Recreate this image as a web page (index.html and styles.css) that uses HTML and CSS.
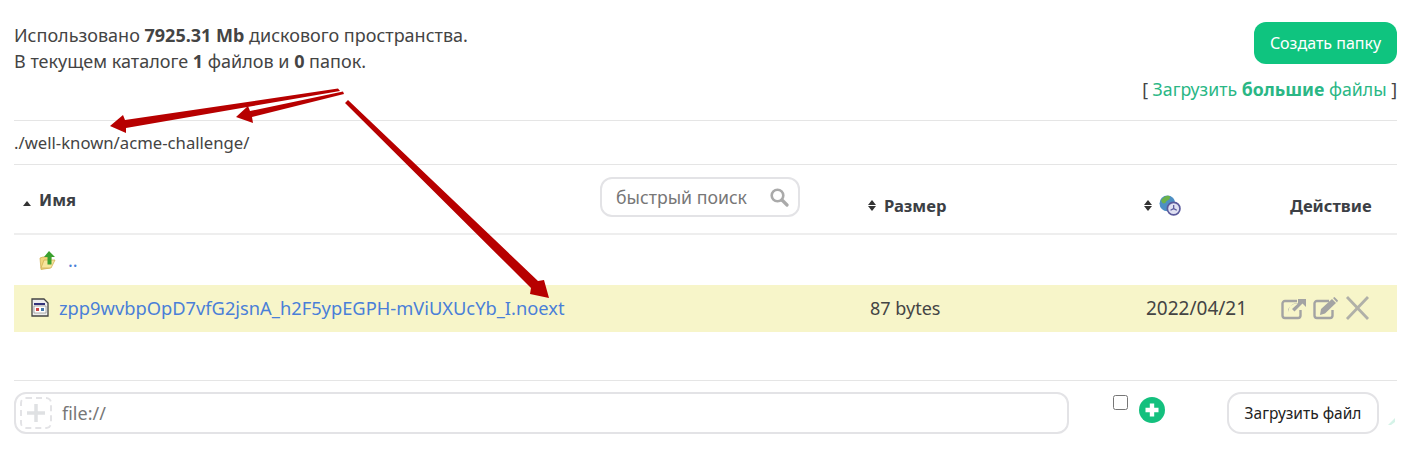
FILE: index.html
```html
<!DOCTYPE html>
<html lang="ru">
<head>
    <meta charset="UTF-8">
    <meta name="viewport" content="width=device-width, initial-scale=1.0">
    <title>Файловый менеджер</title>
    <link rel="stylesheet" href="styles.css">
</head>
<body>
    <div class="top">
        <div class="stats">
            Использовано <b>7925.31 Mb</b> дискового пространства.<br>
            В текущем каталоге <b>1</b> файлов и <b>0</b> папок.
        </div>
        <div class="top-actions">
            <button class="btn-green">Создать папку</button>
            <div class="big-files">[ <a href="#">Загрузить <b>большие</b> файлы</a> ]</div>
        </div>
    </div>

    <div class="path">./well-known/acme-challenge/</div>

    <div class="row head">
        <div class="cell-name">
            <span class="head-name"><i class="sort-up"></i>Имя</span>
            <div class="search">
                <span>быстрый поиск</span>
                <svg width="20" height="20" viewBox="0 0 20 20"><circle cx="8.500" cy="8.500" r="5.800" fill="none" stroke="#aaa" stroke-width="2.600"/><path d="M13 13l5 5" stroke="#aaa" stroke-width="3.200" stroke-linecap="round"/></svg>
            </div>
        </div>
        <div class="head-col"><i class="sort-both"></i>Размер</div>
        <div class="head-col">
            <i class="sort-both"></i>
            <svg width="22" height="21" viewBox="0 0 21 20">
                <circle cx="8" cy="8" r="7.500" fill="#4d8fc4"/>
                <path d="M2 5c2-3 5-5 8-4 2 2-1 4-3 5-1 3-4 3-5-1z" fill="#6cb24a"/>
                <circle cx="14" cy="13" r="6" fill="#dfe0f2" stroke="#5a5a9c" stroke-width="1.600"/>
                <path d="M14 9.500V13l-3 1.500M14 13l3 1.500" stroke="#5a5a9c" stroke-width="1.200" fill="none"/>
            </svg>
        </div>
        <div class="head-action">Действие</div>
    </div>

    <div class="row up-row">
        <div class="cell-name up-name">
            <svg width="18" height="20" viewBox="0 0 18 20">
                <path d="M1 8l3-1h8l-1 11-9 1.500z" fill="#f1d67c" stroke="#d2b055" stroke-width=".8"/>
                <path d="M2 18l3-8h11l-4 8z" fill="#f7e59c" stroke="#d2b055" stroke-width=".8"/>
                <path d="M10 1l6 6h-3.500v7.500h-4V7H5z" fill="#3aa02e"/>
            </svg>
            <a href="#">..</a>
        </div>
    </div>

    <div class="row file-row">
        <div class="cell-name file-name">
            <svg width="18" height="19" viewBox="0 0 18 19">
                <path d="M1 1h12l4 4v13H1z" fill="#eee" stroke="#444" stroke-width="1.300"/>
                <path d="M3 5h11v2H3z" fill="#33337a"/>
                <path d="M3 8h12v7H3z" fill="#fff" stroke="#777" stroke-width=".6"/>
                <path d="M5 10h3v3H5z" fill="#c44"/>
                <path d="M10 10h3v3h-3z" fill="#47a"/>
            </svg>
            <a href="#">zpp9wvbpOpD7vfG2jsnA_h2F5ypEGPH-mViUXUcYb_I.noext</a>
        </div>
        <div class="cell-size">87 bytes</div>
        <div class="cell-date">2022/04/21</div>
        <div class="cell-action">
            <svg width="27" height="24" viewBox="0 0 27 24"><path d="M17 5H5a2.500 2.500 0 0 0-2.500 2.500v12A2.500 2.500 0 0 0 5 22h13a2.500 2.500 0 0 0 2.500-2.500V14" fill="none" stroke="#a3a3a3" stroke-width="2.400"/><path d="M8 16c1-6 5-9 10-9V3l8 0v8l-3.500-3.500-8 8-2.500-2.500 6-5.500c-4 0-7 1-10 6z" fill="#a3a3a3"/></svg>
            <svg width="27" height="24" viewBox="0 0 27 24"><path d="M17 5H5a2.500 2.500 0 0 0-2.500 2.500v12A2.500 2.500 0 0 0 5 22h13a2.500 2.500 0 0 0 2.500-2.500V14" fill="none" stroke="#a3a3a3" stroke-width="2.400"/><path d="M9 13L20 3l4 4-11 10.500-5 1.500zM21 2l1.500-1 3.500 3.500-1 2z" fill="#a3a3a3"/></svg>
            <svg width="26" height="24" viewBox="0 0 26 24"><path d="M3 1l21 22M24 1L3 23" stroke="#b0b0a8" stroke-width="2.800"/></svg>
        </div>
    </div>

    <div class="upload">
        <div class="file-input">
            <span class="plus-box"><svg width="20" height="20" viewBox="0 0 20 20"><path d="M10 1v18M1 10h18" stroke="#dfe1e3" stroke-width="3.500"/></svg></span>
            <span>file://</span>
        </div>
        <input type="checkbox" class="check">
        <svg class="add-more" width="26" height="26" viewBox="0 0 26 26"><circle cx="13" cy="13" r="13" fill="#14c07e"/><path d="M13 6.500v13M6.500 13h13" stroke="#fff" stroke-width="4.400"/></svg>
        <button class="btn-upload">Загрузить файл</button>
        <svg class="corner" width="7" height="7" viewBox="0 0 7 7"><path d="M7 0v4L3 7H0z" fill="#d5f3e8"/></svg>
    </div>

    <!-- стрелки поверх скриншота -->
    <svg class="arrows" width="1406" height="465" viewBox="0 0 1406 465">
        <path d="M338 88.500L340 91 126 128 126 133 110 126 123 115 125 120z" fill="#b70000"/>
        <path d="M343 91.500L344 94 252 117 253 123 236 117 248 106 250 111z" fill="#b70000"/>
        <path d="M348 100L538 281 544 280 549 298 530 294 531 288 345 103z" fill="#b70000"/>
    </svg>
</body>
</html>
```

FILE: styles.css
```css
html, body {
    margin: 0;
    height: 100%;
}
body {
    position: relative;
    box-sizing: border-box;
    padding: 0 9px 0 14px;
    font-family: "Noto Sans", Arial, sans-serif;
    font-size: 18px;
    color: #444;
    background: #fff;
    overflow: hidden;
}
a {
    text-decoration: none;
}
button {
    font-family: inherit;
}
.top {
    display: flex;
    justify-content: space-between;
    height: 120px;
    border-bottom: 1px solid #e5e5e5;
}
.stats {
    padding-top: 22px;
    line-height: 26px;
}
.top-actions {
    display: flex;
    flex-direction: column;
    align-items: flex-end;
    padding-top: 22px;
}
.btn-green {
    width: 143px;
    height: 42px;
    margin-bottom: 13px;
    border: none;
    border-radius: 12px;
    background: #0fc47f;
    color: #fff;
    font-size: 16px;
}
.big-files {
    font-size: 17.7px;
    line-height: 24px;
}
.big-files a {
    color: #2ab785;
}
.path {
    height: 43px;
    line-height: 44px;
    font-size: 16.7px;
    border-bottom: 1px solid #e5e5e5;
}
.row {
    display: grid;
    grid-template-columns: 846px 276px 130px 1fr;
}
.head {
    height: 68px;
    border-bottom: 2px solid #eee;
    font-size: 16.6px;
    font-weight: bold;
    color: #3c3f45;
}
.cell-name {
    display: flex;
    align-items: center;
}
.head .cell-name {
    justify-content: space-between;
    padding: 0 60px 0 9px;
}
.sort-up {
    display: inline-block;
    margin: 0 8px 0 0;
    border: 4px solid transparent;
    border-top: 0;
    border-bottom: 5px solid #333;
}
.sort-both {
    display: inline-block;
    position: relative;
    width: 9px;
    height: 11px;
    margin-right: 7px;
}
.sort-both::before, .sort-both::after {
    content: "";
    position: absolute;
    left: 0;
    border: 4.5px solid transparent;
}
.sort-both::before {
    top: -4px;
    border-bottom: 5px solid #333;
}
.sort-both::after {
    bottom: -4px;
    border-top: 5px solid #333;
}
.search {
    box-sizing: border-box;
    display: flex;
    align-items: center;
    justify-content: space-between;
    width: 200px;
    height: 40px;
    margin-top: -4px;
    padding: 0 9px 0 14px;
    border: 2px solid #e3e3e6;
    border-radius: 12px;
    font-size: 17.7px;
    font-weight: normal;
    color: #777;
}
.head-col {
    display: flex;
    align-items: center;
    margin-top: 12px;
    margin-left: 8px;
}
.head-col svg {
    margin-left: -1px;
}
.head-action {
    align-self: center;
    margin-top: 12px;
    padding-left: 24px;
    white-space: nowrap;
}
.up-row {
    height: 50px;
}
.up-name {
    padding-left: 25px;
    gap: 11px;
}
.up-name a, .file-name a {
    color: #4a7fd8;
}
.file-row {
    box-sizing: border-box;
    height: 47px;
    padding-bottom: 2px;
    align-items: center;
    background: #f7f5c9;
}
.file-name {
    padding-left: 17px;
    gap: 10px;
    font-size: 18.3px;
}
.cell-size {
    padding-left: 10px;
}
.cell-date {
    padding-left: 10px;
    font-size: 19px;
    white-space: nowrap;
}
.cell-action {
    display: flex;
    align-items: center;
    gap: 5px;
    padding-left: 14px;
}
.upload {
    display: flex;
    align-items: flex-start;
    height: 84px;
    margin-top: 48px;
    padding-top: 11px;
    border-top: 1px solid #e5e5e5;
    box-sizing: border-box;
}
.file-input {
    box-sizing: border-box;
    display: flex;
    align-items: center;
    gap: 10px;
    width: 1055px;
    height: 42px;
    padding-left: 4px;
    border: 2px solid #e3e3e6;
    border-radius: 12px;
    color: #777;
}
.plus-box {
    box-sizing: border-box;
    display: flex;
    align-items: center;
    justify-content: center;
    width: 32px;
    height: 32px;
    border: 2px dashed #e3e3e6;
    border-radius: 6px;
}
.check {
    width: 15px;
    height: 15px;
    margin: 3px 0 0 44px;
}
.add-more {
    margin: 5px 0 0 11px;
}
.btn-upload {
    width: 152px;
    height: 42px;
    margin: 0 0 0 62px;
    border: 2px solid #e3e3e6;
    border-radius: 14px;
    background: #fff;
    color: #222;
    font-size: 15.5px;
}
.corner {
    margin: 26px 0 0 9px;
}
.arrows {
    position: absolute;
    top: 0;
    left: 0;
    pointer-events: none;
}
```
